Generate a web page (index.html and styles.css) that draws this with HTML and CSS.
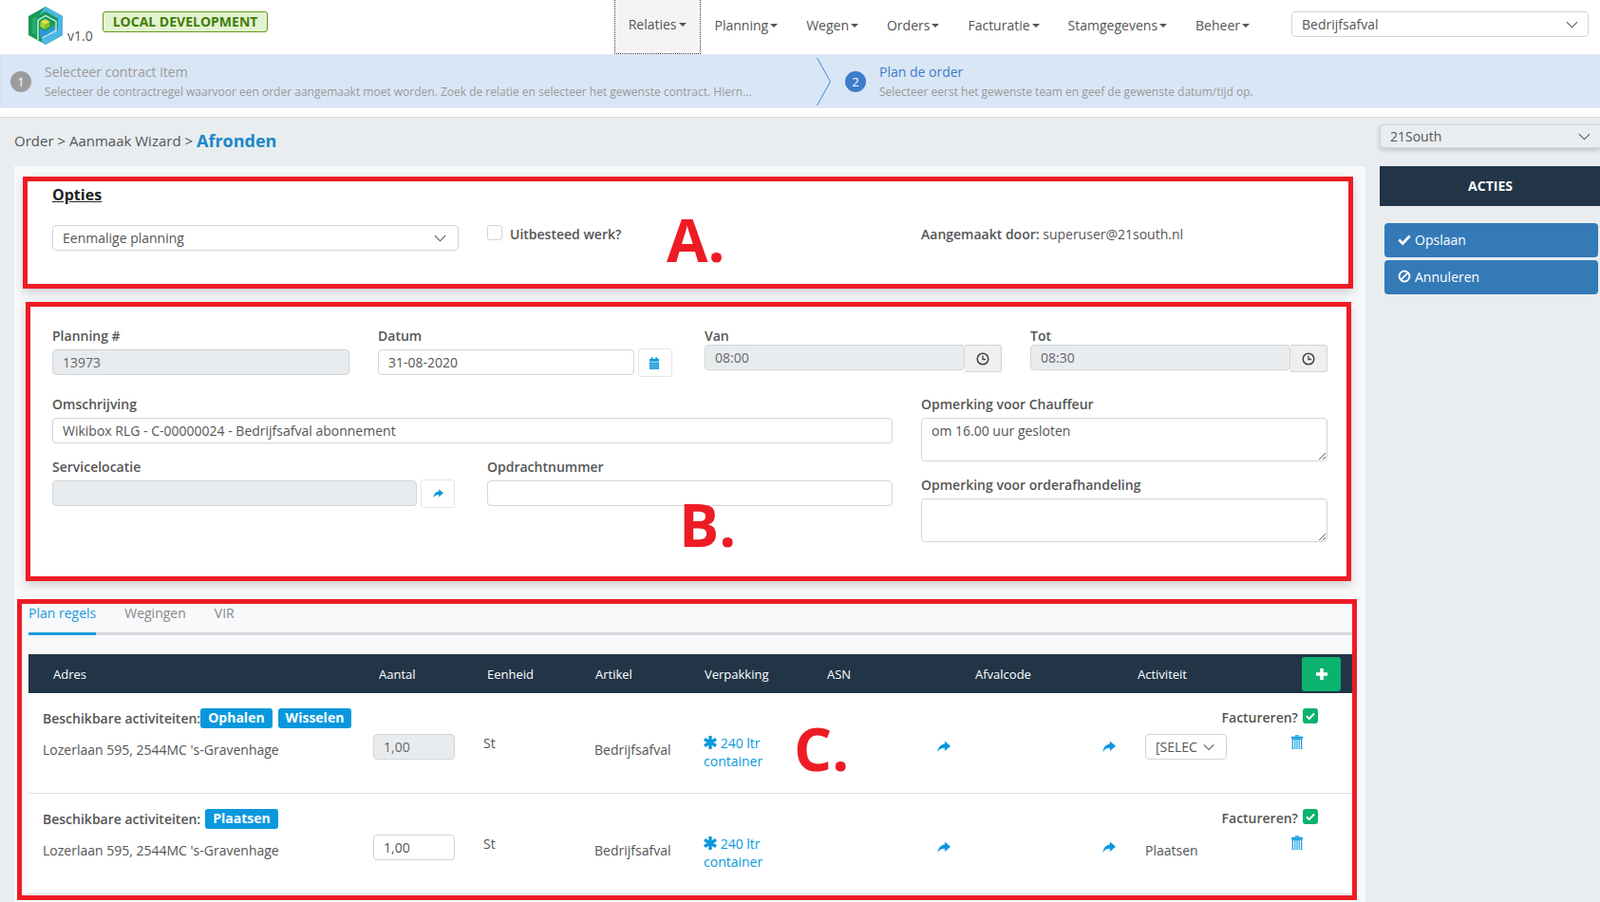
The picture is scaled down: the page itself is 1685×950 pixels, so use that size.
FILE: index.html
```html
<!DOCTYPE html>
<html lang="nl">
<head>
    <meta charset="UTF-8">
    <meta name="viewport" content="width=device-width, initial-scale=1.0">
    <title>Order aanmaken</title>
    <link rel="stylesheet" href="styles.css">
</head>
<body>
    <!-- Iconen -->
    <svg class="icon-defs" xmlns="http://www.w3.org/2000/svg">
        <symbol id="i-chevron" viewBox="0 0 14 8"><path d="M1 1l6 6 6-6" fill="none" stroke="currentColor" stroke-width="1.2"/></symbol>
        <symbol id="i-check" viewBox="0 0 16 16"><path d="M1.500 8.500l4.500 4.500 8.500-9" fill="none" stroke="currentColor" stroke-width="3.200"/></symbol>
        <symbol id="i-ban" viewBox="0 0 16 16"><circle cx="8" cy="8" r="6.200" fill="none" stroke="currentColor" stroke-width="2.200"/><path d="M3.800 12.200l8.400-8.400" stroke="currentColor" stroke-width="2.200"/></symbol>
        <symbol id="i-calendar" viewBox="0 0 11 14"><path d="M0 2h2V0h2v2h3V0h2v2h2v3H0z" fill="currentColor"/><path d="M0 6h11v8H0z" fill="currentColor"/><path d="M1 8h9M1 10h9M1 12h9" stroke="#cfe9f8" stroke-width=".8" stroke-dasharray="1.300 .7"/></symbol>
        <symbol id="i-clock" viewBox="0 0 14 14"><circle cx="7" cy="7" r="5.800" fill="none" stroke="currentColor" stroke-width="1.500"/><path d="M7 3.500V7.500H10" fill="none" stroke="currentColor" stroke-width="1.300"/></symbol>
        <symbol id="i-share" viewBox="0 0 16 14"><path d="M9 0l7 6-7 6V8.500C5 8.500 2.500 9.800.6 13.500.8 8 4 4 9 3.500z" fill="currentColor"/></symbol>
        <symbol id="i-star" viewBox="0 0 14 14"><path d="M7 0v14M.9 3.500l12.200 7M.9 10.500l12.200-7" stroke="currentColor" stroke-width="3.300"/></symbol>
        <symbol id="i-trash" viewBox="0 0 12 15"><path d="M4 1.500V.6h4v.9M0 2h12v1.600H0z" fill="currentColor" stroke="currentColor" stroke-width=".5"/><path d="M1.300 4.500h9.400V15H1.300z" fill="none" stroke="currentColor" stroke-width="1.200"/><path d="M3.800 5v9M6 5v9M8.200 5v9" stroke="currentColor" stroke-width="1.100"/></symbol>
        <symbol id="i-plus" viewBox="0 0 12 12"><path d="M6 0v12M0 6h12" stroke="currentColor" stroke-width="3.600"/></symbol>
    </svg>

    <header class="topbar">
        <div class="brand">
            <svg class="logo" viewBox="0 0 36 40" xmlns="http://www.w3.org/2000/svg">
                <path d="M18 0L36 10V30L18 40L0 30V10z" fill="#159a57"/>
                <path d="M4 12.500V27.500L8 29.800V10.200z" fill="#27ae6c"/>
                <path d="M18 0L36 10V30L18 40L14 37.800V33L31 24V12.500L18 5L11 9z" fill="#4db7e3"/>
                <path d="M10 35V14.500L18 9.500L29 15.500V25L14 33" fill="none" stroke="#d8efea" stroke-width="1.400"/>
                <path d="M12 15.500L18 12L27 16.500V23.500L12 31z" fill="#169b63"/>
                <path d="M12 23L17.500 26L28 20V24.500L14 32.500L12 31z" fill="#2a9ade"/>
                <path d="M12.500 16L17.500 13L22.500 16L17.500 19z" fill="#dbe63c"/>
                <path d="M12.500 16L17.500 19V24L12.500 21z" fill="#bdd42c"/>
                <path d="M17.500 19L22.500 16V21L17.500 24z" fill="#8fbc2b"/>
            </svg>
            <span class="version">v1.0</span>
            <span class="env-badge">LOCAL DEVELOPMENT</span>
        </div>
        <nav class="mainnav">
            <a class="nav-item active">Relaties<i class="caret"></i></a>
            <a class="nav-item">Planning<i class="caret"></i></a>
            <a class="nav-item">Wegen<i class="caret"></i></a>
            <a class="nav-item">Orders<i class="caret"></i></a>
            <a class="nav-item">Facturatie<i class="caret"></i></a>
            <a class="nav-item">Stamgegevens<i class="caret"></i></a>
            <a class="nav-item">Beheer<i class="caret"></i></a>
        </nav>
        <div class="select select-top">Bedrijfsafval<svg class="chev"><use href="#i-chevron"/></svg></div>
    </header>

    <div class="wizard">
        <div class="step step-one">
            <span class="step-nr">1</span>
            <div class="step-text">
                <div class="step-title">Selecteer contract item</div>
                <div class="step-desc">Selecteer de contractregel waarvoor een order aangemaakt moet worden. Zoek de relatie en selecteer het gewenste contract. Hiern...</div>
            </div>
        </div>
        <svg class="step-arrow" viewBox="0 0 15 50"><path d="M.5 0L14.500 25L.5 50" fill="none" stroke="#4a86cf"/></svg>
        <div class="step step-two">
            <span class="step-nr">2</span>
            <div class="step-text">
                <div class="step-title">Plan de order</div>
                <div class="step-desc">Selecteer eerst het gewenste team en geef de gewenste datum/tijd op.</div>
            </div>
        </div>
    </div>
    <div class="wizard-gap"></div>

    <div class="page">
        <main class="content">
            <div class="breadcrumb">Order &gt; Aanmaak Wizard &gt; <strong>Afronden</strong></div>

            <div class="panel">
                <section class="mark mark-a">
                    <h2 class="opties-title">Opties</h2>
                    <div class="opties-row">
                        <div class="select select-plan">Eenmalige planning<svg class="chev"><use href="#i-chevron"/></svg></div>
                        <label class="uitbesteed"><span class="checkbox"></span>Uitbesteed werk?</label>
                        <div class="created"><b>Aangemaakt door:</b> superuser@21south.nl</div>
                    </div>
                    <span class="note note-a">A.</span>
                </section>

                <section class="mark mark-b">
                    <div class="row-top">
                        <div class="field field-planning">
                            <label>Planning #</label>
                            <input type="text" value="13973" disabled>
                        </div>
                        <div class="field field-datum">
                            <label>Datum</label>
                            <div class="input-line">
                                <input type="text" value="31-08-2020">
                                <button class="side-btn" type="button"><svg class="ico-cal"><use href="#i-calendar"/></svg></button>
                            </div>
                        </div>
                        <div class="field field-time">
                            <label>Van</label>
                            <div class="time-line">
                                <input type="text" value="08:00" disabled>
                                <span class="time-addon"><svg class="ico-clock"><use href="#i-clock"/></svg></span>
                            </div>
                        </div>
                        <div class="field field-time field-last">
                            <label>Tot</label>
                            <div class="time-line">
                                <input type="text" value="08:30" disabled>
                                <span class="time-addon"><svg class="ico-clock"><use href="#i-clock"/></svg></span>
                            </div>
                        </div>
                    </div>
                    <div class="row-bottom">
                        <div class="col-left">
                            <div class="field">
                                <label>Omschrijving</label>
                                <input type="text" value="Wikibox RLG - C-00000024 - Bedrijfsafval abonnement">
                            </div>
                            <div class="col-left-sub">
                                <div class="field field-service">
                                    <label>Servicelocatie</label>
                                    <div class="input-line">
                                        <input type="text" disabled>
                                        <button class="side-btn" type="button"><svg class="ico-share ico-share-small"><use href="#i-share"/></svg></button>
                                    </div>
                                </div>
                                <div class="field field-opdracht">
                                    <label>Opdrachtnummer</label>
                                    <input type="text">
                                </div>
                            </div>
                        </div>
                        <div class="col-right">
                            <div class="field">
                                <label>Opmerking voor Chauffeur</label>
                                <textarea>om 16.00 uur gesloten</textarea>
                            </div>
                            <div class="field field-orderafh">
                                <label>Opmerking voor orderafhandeling</label>
                                <textarea></textarea>
                            </div>
                        </div>
                    </div>
                    <span class="note note-b">B.</span>
                </section>

                <section class="mark mark-c">
                    <div class="tabs">
                        <a class="tab active">Plan regels</a>
                        <a class="tab">Wegingen</a>
                        <a class="tab">VIR</a>
                    </div>

                    <div class="regels">
                        <div class="regels-head">
                            <span class="h-adres">Adres</span>
                            <span class="h-aantal">Aantal</span>
                            <span>Eenheid</span>
                            <span>Artikel</span>
                            <span>Verpakking</span>
                            <span class="h-small">ASN</span>
                            <span class="h-small">Afvalcode</span>
                            <span class="h-small">Activiteit</span>
                            <span class="h-add"><button class="add-btn" type="button"><svg class="ico-plus"><use href="#i-plus"/></svg></button></span>
                        </div>

                        <div class="regel">
                            <div class="regel-top">
                                <div class="beschikbaar tight">Beschikbare activiteiten:<span class="badge">Ophalen</span><span class="badge">Wisselen</span></div>
                                <div class="factureren">Factureren?<span class="check-on"><svg><use href="#i-check"/></svg></span></div>
                            </div>
                            <div class="regel-cols">
                                <div class="c-adres">Lozerlaan 595, 2544MC 's-Gravenhage</div>
                                <div><input class="aantal" type="text" value="1,00" disabled></div>
                                <div>St</div>
                                <div class="c-artikel">Bedrijfsafval</div>
                                <div class="c-verpakking"><svg class="ico-star"><use href="#i-star"/></svg> 240 ltr<br>container</div>
                                <div class="c-share-a"><svg class="ico-share"><use href="#i-share"/></svg></div>
                                <div class="c-share-b"><svg class="ico-share"><use href="#i-share"/></svg></div>
                                <div class="c-activiteit"><div class="select select-act">[SELEC<svg class="chev"><use href="#i-chevron"/></svg></div></div>
                                <div class="c-trash"><svg class="ico-trash"><use href="#i-trash"/></svg></div>
                            </div>
                            <span class="note note-c">C.</span>
                        </div>

                        <div class="regel">
                            <div class="regel-top">
                                <div class="beschikbaar">Beschikbare activiteiten:<span class="badge">Plaatsen</span></div>
                                <div class="factureren">Factureren?<span class="check-on"><svg><use href="#i-check"/></svg></span></div>
                            </div>
                            <div class="regel-cols">
                                <div class="c-adres">Lozerlaan 595, 2544MC 's-Gravenhage</div>
                                <div><input class="aantal" type="text" value="1,00"></div>
                                <div>St</div>
                                <div class="c-artikel">Bedrijfsafval</div>
                                <div class="c-verpakking"><svg class="ico-star"><use href="#i-star"/></svg> 240 ltr<br>container</div>
                                <div class="c-share-a"><svg class="ico-share"><use href="#i-share"/></svg></div>
                                <div class="c-share-b"><svg class="ico-share"><use href="#i-share"/></svg></div>
                                <div class="c-activiteit c-act-text">Plaatsen</div>
                                <div class="c-trash"><svg class="ico-trash"><use href="#i-trash"/></svg></div>
                            </div>
                        </div>
                    </div>
                </section>
            </div>
        </main>

        <aside class="sidebar">
            <div class="select select-org">21South<svg class="chev"><use href="#i-chevron"/></svg></div>
            <div class="acties-head">ACTIES</div>
            <div class="acties-list">
                <button class="actie" type="button"><svg><use href="#i-check"/></svg>Opslaan</button>
                <button class="actie" type="button"><svg><use href="#i-ban"/></svg>Annuleren</button>
            </div>
        </aside>
    </div>
</body>
</html>
```

FILE: styles.css
```css
* {
    box-sizing: border-box;
}
html, body {
    height: 100%;
}
body {
    margin: 0;
    overflow: hidden;
    background-color: #e9edf0;
    color: #555;
    font-family: "Open Sans", sans-serif;
    font-size: 14px;
    line-height: 20px;
}
.icon-defs {
    position: absolute;
    width: 0;
    height: 0;
}
input, textarea, button {
    font-family: inherit;
    font-size: 14px;
    color: #555;
}
input, textarea {
    display: block;
    width: 100%;
    height: 27px;
    padding: 0 10px;
    background-color: #fff;
    border: 1px solid #d4d4d4;
    border-radius: 4px;
    outline: none;
}
input:disabled {
    background-color: #e9ecef;
    color: #666;
}
textarea {
    height: 46px;
    padding-top: 3px;
}

/* Selects */
.select {
    display: flex;
    align-items: center;
    justify-content: space-between;
    height: 27px;
    padding: 0 10px;
    background-color: #fff;
    border: 1px solid #d4d4d4;
    border-radius: 4px;
}
.chev {
    width: 13px;
    height: 8px;
    flex: none;
    color: #555;
}

/* Topbar */
.topbar {
    display: flex;
    height: 57px;
    padding-right: 12px;
    background-color: #fff;
}
.brand {
    display: flex;
    align-items: flex-start;
    padding-left: 30px;
}
.logo {
    width: 36px;
    height: 40px;
    margin-top: 7px;
}
.version {
    margin: 28px 0 0 5px;
}
.env-badge {
    height: 22px;
    margin: 12px 0 0 10px;
    padding: 0 10px;
    background-color: #e3f3d0;
    border: 1px solid #5f9c17;
    border-radius: 3px;
    color: #417d08;
    font-size: 14px;
    font-weight: 700;
    line-height: 19px;
}
.mainnav {
    display: flex;
    margin-left: auto;
}
.nav-item {
    display: flex;
    align-items: center;
    height: 57px;
    padding: 0 15px 4px;
    color: #555;
    white-space: nowrap;
}
.nav-item.active {
    background-color: #f4f4f4;
    border: 1px dotted #444;
    border-top: 0;
    padding: 0 14px 4px;
}
.caret {
    margin-left: 2px;
    border-top: 4.500px solid #555;
    border-left: 4px solid transparent;
    border-right: 4px solid transparent;
}
.select-top {
    width: 313px;
    margin: 12px 0 0 29px;
}

/* Wizard */
.wizard {
    display: flex;
    height: 57px;
    background-color: #d9e6f5;
    border: 1px solid #e3e8ee;
    border-left-color: #d9e0e8;
    border-radius: 4px 0 0 4px;
}
.step {
    display: flex;
    align-items: center;
    gap: 14px;
}
.step-one {
    width: 859px;
    padding-left: 10px;
}
.step-two {
    padding-left: 15px;
}
.step-arrow {
    width: 15px;
    height: 50px;
    margin-top: 3px;
}
.step-nr {
    display: flex;
    align-items: center;
    justify-content: center;
    flex: none;
    width: 22px;
    height: 22px;
    border-radius: 50%;
    background-color: #9c9c9c;
    color: #fff;
    font-size: 13px;
}
.step-two .step-nr {
    background-color: #3d7cc9;
}
.step-text {
    min-width: 0;
    padding-top: 2px;
}
.step-title {
    color: #999;
    font-size: 14px;
}
.step-two .step-title {
    color: #3d7cc9;
}
.step-desc {
    margin-top: 1px;
    color: #999;
    font-size: 12px;
    white-space: nowrap;
}
.wizard-gap {
    height: 10px;
    background-color: #fff;
    border-bottom: 1px solid #d6d9dc;
}

/* Pagina */
.page {
    display: flex;
}
.content {
    width: 1453px;
}
.breadcrumb {
    display: flex;
    align-items: center;
    gap: 4px;
    height: 51px;
    padding: 0 0 4px 15px;
    font-size: 15px;
}
.breadcrumb strong {
    color: #1a87c9;
    font-size: 18px;
}
.panel {
    width: 1423px;
    height: 775px;
    margin-left: 15px;
    padding-top: 11px;
    background-color: #f8f9fb;
}

/* Rode kaders uit de annotatie */
.mark {
    position: relative;
    background-color: #fff;
    border: 5px solid #ed1c24;
    box-shadow: 0 4px 10px rgba(0, 0, 0, .18);
}
.note {
    position: absolute;
    color: #ed1c24;
    font-size: 63px;
    font-weight: 700;
    line-height: 1;
}
.mark-a {
    width: 1401px;
    height: 118px;
    margin-left: 9px;
    padding: 4px 0 0 26px;
}
.note-a {
    left: 673px;
    top: 29px;
}
.mark-b {
    width: 1396px;
    height: 294px;
    margin: 14px 0 0 12px;
    padding: 21px 0 0 23px;
}
.note-b {
    left: 683px;
    top: 197px;
}
.mark-c {
    width: 1411px;
    height: 317px;
    margin: 19px 0 0 3px;
    padding-left: 7px;
    background-color: #f8f9fb;
    box-shadow: none;
}
.note-c {
    left: 806px;
    top: 26px;
}

/* A: opties */
.opties-title {
    margin: 0;
    color: #222;
    font-size: 16px;
    font-weight: 700;
    line-height: 20px;
    text-decoration: underline;
}
.opties-row {
    display: flex;
    margin-top: 22px;
}
.select-plan {
    width: 428px;
    padding-right: 12px;
}
.uitbesteed {
    display: flex;
    width: 457px;
    margin-left: 30px;
    font-weight: 600;
}
.checkbox {
    width: 16px;
    height: 16px;
    margin-right: 8px;
    border: 1px solid #d4d4d4;
    border-radius: 3px;
    background-color: #fff;
}
.created {
    line-height: 20px;
}
.created b {
    font-weight: 600;
}

/* B: planning */
.field label {
    display: block;
    font-weight: 600;
    margin-bottom: 4px;
}
.row-top {
    display: flex;
    height: 72px;
}
.field-planning {
    width: 313px;
    margin-right: 30px;
}
.field-datum {
    width: 310px;
    margin-right: 34px;
}
.field-time {
    width: 313px;
    margin-right: 30px;
}
.field-time label {
    margin-bottom: -1px;
}
.field-last {
    margin-right: 0;
}
.input-line {
    display: flex;
    gap: 4px;
}
.side-btn {
    display: flex;
    align-items: center;
    justify-content: center;
    flex: none;
    width: 36px;
    height: 30px;
    margin-top: -1px;
    padding: 0;
    background-color: #fff;
    border: 1px solid #e6e6e6;
    border-radius: 3px;
    color: #0a98dd;
}
.time-line {
    display: flex;
    align-items: flex-start;
}
.time-addon {
    display: flex;
    align-items: center;
    justify-content: center;
    flex: none;
    width: 39px;
    height: 29px;
    background-color: #efefef;
    border: 1px solid #d4d4d4;
    border-left: 0;
    border-radius: 0 3px 3px 0;
    color: #444;
}
.ico-cal {
    width: 10px;
    height: 13px;
    margin-right: 2px;
    color: #0a98dd;
}
.ico-clock {
    width: 14px;
    height: 14px;
}
.ico-share {
    width: 14px;
    height: 13px;
    color: #0a98dd;
}
.ico-share-small {
    width: 11px;
    height: 10px;
}
.row-bottom {
    display: flex;
    gap: 30px;
}
.col-left {
    width: 885px;
}
.col-right {
    width: 428px;
}
.col-left-sub {
    display: flex;
    gap: 34px;
    margin-top: 15px;
}
.field-service {
    width: 424px;
}
.field-opdracht {
    width: 427px;
}
.field-orderafh {
    margin-top: 15px;
}

/* C: plan regels */
.tabs {
    display: flex;
    gap: 30px;
    height: 33px;
    border-bottom: 3px solid #d3d5d9;
}
.tab {
    height: 33px;
    color: #888;
}
.tab.active {
    color: #1b9adc;
    border-bottom: 3px solid #1b9adc;
}
.regels {
    margin-top: 20px;
}
.regels-head, .regel-cols {
    display: grid;
    grid-template-columns: 363px 116px 114px 115px 130px 156px 171px 150px 78px;
}
.regels-head {
    align-items: center;
    height: 41px;
    background-color: #213547;
    color: #fff;
    font-size: 13px;
}
.regels-head span {
    padding-left: 4px;
}
.regels-head .h-adres {
    padding-left: 26px;
}
.regels-head .h-aantal {
    padding-left: 6px;
}
.regels-head .h-small {
    padding-left: 3px;
}
.regels-head .h-add {
    padding-left: 26px;
}
.add-btn {
    display: flex;
    align-items: center;
    justify-content: center;
    width: 41px;
    height: 36px;
    padding: 0;
    background-color: #0bb26e;
    border: 0;
    border-radius: 3px;
    color: #fff;
}
.ico-plus {
    width: 12px;
    height: 12px;
}
.regel {
    position: relative;
    height: 106px;
    padding-top: 16px;
    background-color: #fff;
    border-bottom: 1px solid #dcdfe3;
}
.regel-top {
    display: flex;
    justify-content: space-between;
    height: 21px;
    margin-bottom: 6px;
    padding: 0 36px 0 15px;
    font-weight: 600;
}
.beschikbaar {
    display: flex;
    align-items: center;
    line-height: 19px;
}
.badge {
    height: 21px;
    margin-left: 5px;
    padding: 0 8px;
    background-color: #0a98dd;
    border-radius: 3px;
    color: #fff;
    font-weight: 700;
    line-height: 19px;
}
.badge + .badge {
    margin-left: 6px;
}
.tight .badge:first-of-type {
    margin-left: 0;
}
.factureren {
    display: flex;
    align-items: flex-start;
    line-height: 19px;
}
.check-on {
    display: flex;
    align-items: center;
    justify-content: center;
    width: 16px;
    height: 16px;
    margin-left: 5px;
    background-color: #0bb26e;
    border-radius: 3px;
    color: #fff;
}
.check-on svg {
    width: 10px;
    height: 10px;
}
.aantal {
    width: 86px;
}
.c-adres {
    padding: 7px 0 0 15px;
}
.c-artikel {
    padding: 7px 0 0 3px;
}
.c-verpakking {
    padding-left: 3px;
    color: #0a98dd;
    line-height: 19px;
}
.ico-star {
    width: 14px;
    height: 14px;
    vertical-align: -1px;
}
.c-share-a {
    padding: 5px 0 0 119px;
}
.c-share-b {
    padding: 5px 0 0 137px;
}
.c-activiteit {
    padding-left: 11px;
}
.c-act-text {
    padding-top: 7px;
}
.select-act {
    width: 86px;
    padding-right: 12px;
}
.select-act .chev {
    width: 12px;
}
.c-trash {
    padding: 1px 0 0 15px;
}
.ico-trash {
    width: 12px;
    height: 15px;
    color: #0a98dd;
}

/* Zijbalk */
.sidebar {
    width: 232px;
    padding-top: 7px;
}
.select-org {
    height: 25px;
    margin-bottom: 19px;
    padding-right: 10px;
    background-color: #e9edf0;
    border-right: 0;
    border-radius: 4px 0 0 4px;
    box-shadow: 0 2px 5px rgba(0, 0, 0, .2);
}
.acties-head {
    height: 42px;
    padding-left: 1px;
    background-color: #213547;
    color: #fff;
    font-size: 14px;
    font-weight: 700;
    line-height: 42px;
    text-align: center;
}
.acties-list {
    display: flex;
    flex-direction: column;
    gap: 3px;
    width: 225px;
    margin: 18px 0 0 5px;
}
.actie {
    display: flex;
    align-items: center;
    gap: 4px;
    height: 36px;
    padding: 0 0 2px 14px;
    background-color: #337ab7;
    border: 0;
    border-radius: 4px;
    color: #fff;
}
.actie svg {
    width: 14px;
    height: 14px;
}
```
